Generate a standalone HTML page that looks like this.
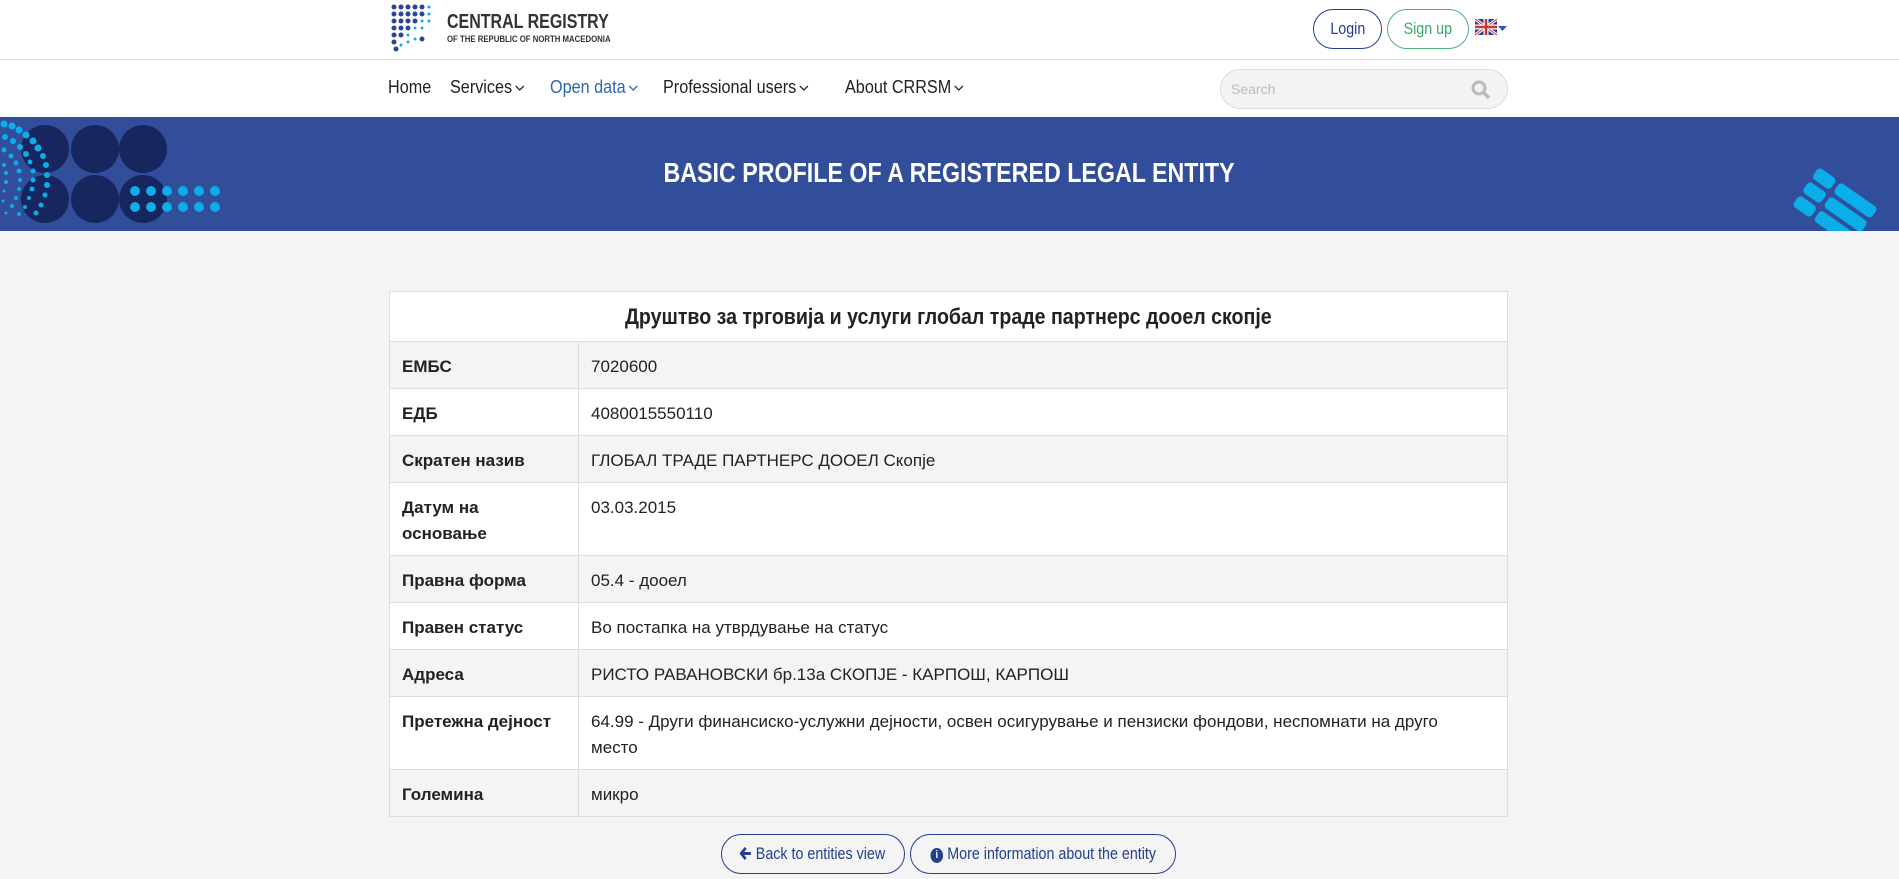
<!DOCTYPE html>
<html><head><meta charset="utf-8"><style>
*{margin:0;padding:0;box-sizing:border-box}
body{width:1899px;height:879px;overflow:hidden;background:#f4f4f4;font-family:"Liberation Sans",sans-serif;position:relative}
.sx{display:inline-block;white-space:nowrap}
#top{position:absolute;left:0;top:0;width:1899px;height:117px;background:#fff}
#line{position:absolute;left:0;top:59px;width:1899px;height:1px;background:#ddd}
.abs{position:absolute}
.btn{position:absolute;border-radius:20px;border:1px solid #233f8f;height:40px;display:flex;align-items:center;justify-content:center;font-size:17px;white-space:nowrap}
.btn .sx{transform:scaleX(.84)}
#nav span{position:absolute;top:77px;font-size:18px;color:#222;transform:scaleX(.9);transform-origin:left;white-space:nowrap}
#nav svg{margin-left:3px;vertical-align:middle}
#banner{position:absolute;left:0;top:117px;width:1899px;height:114px;background:#324d9a;overflow:hidden}
table{position:absolute;left:389px;top:291px;width:1119px;border-collapse:collapse;font-size:17px;color:#222}
td,th{border:1px solid #ddd;padding:0 12px;vertical-align:top}
th{height:50px;font-size:22px;vertical-align:middle;background:#fff}
td{padding-top:12px;line-height:26px}
td.l{font-weight:bold;width:189px}
tr.g td{background:#f4f4f4}
tr.w td{background:#fff}
</style></head><body>
<div id="top"></div><div id="line"></div>
<svg class="abs" style="left:386px;top:3px" width="52" height="50" viewBox="0 0 44 50">
<g fill="#2a4597">
<circle cx="4" cy="4" r="2.5"/><circle cx="11" cy="4" r="2.5"/><circle cx="18" cy="4" r="2.5"/><circle cx="25" cy="4" r="2.5"/><circle cx="32" cy="4" r="2.5"/>
<circle cx="4" cy="11" r="2.5"/><circle cx="11" cy="11" r="2.5"/><circle cx="18" cy="11" r="2.5"/><circle cx="25" cy="11" r="2.5"/><circle cx="32" cy="11" r="2.5"/>
<circle cx="4" cy="18" r="2.5"/><circle cx="11" cy="18" r="2.5"/><circle cx="18" cy="18" r="2.5"/><circle cx="25" cy="18" r="2.5"/>
<circle cx="4" cy="25" r="2.5"/><circle cx="11" cy="25" r="2.5"/><circle cx="18" cy="25" r="2.5"/>
<circle cx="4" cy="32" r="2.5"/><circle cx="11" cy="32" r="2.5"/><circle cx="32" cy="36" r="2.5"/>
<circle cx="4" cy="39" r="2.5"/><circle cx="6" cy="46" r="2.5"/></g>
<g fill="#19a9e6"><circle cx="39" cy="4" r="1.5"/><circle cx="39" cy="11" r="1.5"/><circle cx="32" cy="18" r="1.5"/><circle cx="25" cy="25" r="1.5"/><circle cx="18" cy="32" r="1.5"/><circle cx="25" cy="36" r="1.5"/><circle cx="18" cy="39" r="1.5"/><circle cx="11" cy="42" r="1.5"/><circle cx="32" cy="25" r="1.5"/><circle cx="39" cy="18" r="1.5"/></g>
</svg>
<div class="abs" style="left:447px;top:11px;font-size:20px;font-weight:bold;color:#333;transform:scaleX(.8);transform-origin:left;white-space:nowrap">CENTRAL REGISTRY</div>
<div class="abs" style="left:447px;top:34px;font-size:9.5px;font-weight:bold;color:#333;transform:scaleX(.82);transform-origin:left;white-space:nowrap">OF THE REPUBLIC OF NORTH MACEDONIA</div>
<div class="btn" style="left:1313px;top:9px;width:69px;color:#233f8f"><span class="sx">Login</span></div>
<div class="btn" style="left:1387px;top:9px;width:82px;color:#3aa86a;border-color:#4cb07a"><span class="sx">Sign up</span></div>
<svg class="abs" style="left:1475px;top:19px" width="34" height="18"><rect width="22" height="16" fill="#2a3f8f"/><path d="M0 0L22 16M22 0L0 16" stroke="#fff" stroke-width="3"/><path d="M0 0L22 16M22 0L0 16" stroke="#c33" stroke-width="1"/><path d="M11 0V16M0 8H22" stroke="#fff" stroke-width="5"/><path d="M11 0V16M0 8H22" stroke="#c33" stroke-width="2.5"/><path d="M23 7h9l-4.5 5z" fill="#2a5dab"/></svg>
<div id="nav">
<span style="left:388px">Home</span>
<span style="left:450px">Services<svg width="11" height="8"><path d="M1 2l4.5 4 4.5-4" fill="none" stroke="#222" stroke-width="1.4"/></svg></span>
<span style="left:550px;color:#2a66b5">Open data<svg width="11" height="8"><path d="M1 2l4.5 4 4.5-4" fill="none" stroke="#2a66b5" stroke-width="1.4"/></svg></span>
<span style="left:663px">Professional users<svg width="11" height="8"><path d="M1 2l4.5 4 4.5-4" fill="none" stroke="#222" stroke-width="1.4"/></svg></span>
<span style="left:845px">About CRRSM<svg width="11" height="8"><path d="M1 2l4.5 4 4.5-4" fill="none" stroke="#222" stroke-width="1.4"/></svg></span>
</div>
<div class="abs" style="left:1220px;top:69px;width:288px;height:40px;border:1px solid #ddd;border-radius:20px;background:#f3f3f3"></div>
<div class="abs" style="left:1231px;top:81px;font-size:14px;color:#bbb">Search</div>
<svg class="abs" style="left:1471px;top:80px" width="20" height="20"><circle cx="8" cy="8" r="6" fill="none" stroke="#bbb" stroke-width="3"/><path d="M12 12l6 6" stroke="#bbb" stroke-width="3.5"/></svg>
<div id="banner">
<svg width="260" height="114" class="abs" style="left:0;top:0">
<g fill="#18265f"><circle cx="45" cy="32" r="24"/><circle cx="95" cy="32" r="24"/><circle cx="143" cy="32" r="24"/><circle cx="45" cy="82" r="24"/><circle cx="95" cy="82" r="24"/><circle cx="143" cy="82" r="24"/></g>
<g fill="#0aaee9"><circle cx="135" cy="74" r="5"/><circle cx="151" cy="74" r="5"/><circle cx="167" cy="74" r="5"/><circle cx="183" cy="74" r="5"/><circle cx="199" cy="74" r="5"/><circle cx="215" cy="74" r="5"/>
<circle cx="135" cy="90" r="5"/><circle cx="151" cy="90" r="5"/><circle cx="167" cy="90" r="5"/><circle cx="183" cy="90" r="5"/><circle cx="199" cy="90" r="5"/><circle cx="215" cy="90" r="5"/>
<circle cx="4" cy="7" r="3.5"/><circle cx="12" cy="9" r="3.5"/><circle cx="19" cy="13" r="3.5"/><circle cx="26" cy="18" r="3.5"/><circle cx="33" cy="24" r="3.5"/><circle cx="38" cy="31" r="3.5"/><circle cx="43" cy="39" r="3"/><circle cx="46" cy="48" r="3"/><circle cx="47" cy="58" r="3"/><circle cx="47" cy="68" r="3"/><circle cx="45" cy="78" r="2.5"/><circle cx="41" cy="88" r="2.5"/><circle cx="36" cy="96" r="2.5"/>
<circle cx="5" cy="20" r="3"/><circle cx="13" cy="24" r="3"/><circle cx="20" cy="30" r="3"/><circle cx="26" cy="37" r="3"/><circle cx="30" cy="45" r="2.5"/><circle cx="33" cy="54" r="2.5"/><circle cx="33" cy="63" r="2.5"/><circle cx="32" cy="72" r="2.5"/><circle cx="29" cy="81" r="2"/><circle cx="25" cy="90" r="2"/><circle cx="19" cy="97" r="2"/>
<circle cx="4" cy="33" r="2.5"/><circle cx="11" cy="39" r="2.5"/><circle cx="16" cy="46" r="2.5"/><circle cx="19" cy="54" r="2.5"/><circle cx="20" cy="63" r="2"/><circle cx="19" cy="72" r="2"/><circle cx="16" cy="81" r="2"/><circle cx="12" cy="89" r="2"/><circle cx="6" cy="96" r="1.5"/>
<circle cx="4" cy="48" r="2"/><circle cx="6" cy="56" r="2"/><circle cx="6" cy="65" r="2"/><circle cx="4" cy="74" r="1.5"/><circle cx="3" cy="84" r="1.5"/></g>
</svg>
<svg width="110" height="64" class="abs" style="left:1789px;top:50px">
<g fill="#0aaee9" transform="translate(30 0) rotate(35)">
<rect x="0" y="0" width="22" height="13" rx="4"/><rect x="26" y="0" width="46" height="13" rx="4"/>
<rect x="0" y="17" width="22" height="13" rx="4"/><rect x="26" y="17" width="46" height="13" rx="4"/>
<rect x="0" y="34" width="22" height="13" rx="4"/><rect x="26" y="34" width="46" height="13" rx="4"/>
</g></svg>
<div class="abs" style="left:0;width:1899px;top:40px;text-align:center;color:#fff;font-size:28px;font-weight:bold"><span class="sx" style="transform:scaleX(.83)">BASIC PROFILE OF A REGISTERED LEGAL ENTITY</span></div>
</div>
<table>
<tr><th colspan="2"><span class="sx" style="transform:scaleX(.89)">Друштво за трговија и услуги глобал траде партнерс дооел скопје</span></th></tr>
<tr class="g" style="height:47px"><td class="l">ЕМБС</td><td>7020600</td></tr>
<tr class="w" style="height:47px"><td class="l">ЕДБ</td><td>4080015550110</td></tr>
<tr class="g" style="height:47px"><td class="l">Скратен назив</td><td>ГЛОБАЛ ТРАДЕ ПАРТНЕРС ДООЕЛ Скопје</td></tr>
<tr class="w" style="height:73px"><td class="l">Датум на основање</td><td>03.03.2015</td></tr>
<tr class="g" style="height:47px"><td class="l">Правна форма</td><td>05.4 - дооел</td></tr>
<tr class="w" style="height:47px"><td class="l">Правен статус</td><td>Во постапка на утврдување на статус</td></tr>
<tr class="g" style="height:47px"><td class="l">Адреса</td><td>РИСТО РАВАНОВСКИ бр.13а СКОПЈЕ - КАРПОШ, КАРПОШ</td></tr>
<tr class="w" style="height:73px"><td class="l">Претежна дејност</td><td>64.99 - Други финансиско-услужни дејности, освен осигурување и пензиски фондови, неспомнати на друго<br>место</td></tr>
<tr class="g" style="height:47px"><td class="l">Големина</td><td>микро</td></tr>
</table>
<div class="btn" style="left:721px;top:834px;width:184px;color:#233f8f"><span class="sx"><svg width="14" height="13" style="vertical-align:-1px;margin-right:5px"><path d="M7 1L1.5 6.5 7 12M2 6.5H13" fill="none" stroke="#233f8f" stroke-width="3"/></svg>Back to entities view</span></div>
<div class="btn" style="left:910px;top:834px;width:266px;color:#233f8f"><span class="sx"><span style="display:inline-block;width:15px;height:15px;border-radius:50%;background:#233f8f;color:#fff;font-size:11px;line-height:15px;text-align:center;font-weight:bold;margin-right:5px;vertical-align:1px">i</span>More information about the entity</span></div>
</body></html>
